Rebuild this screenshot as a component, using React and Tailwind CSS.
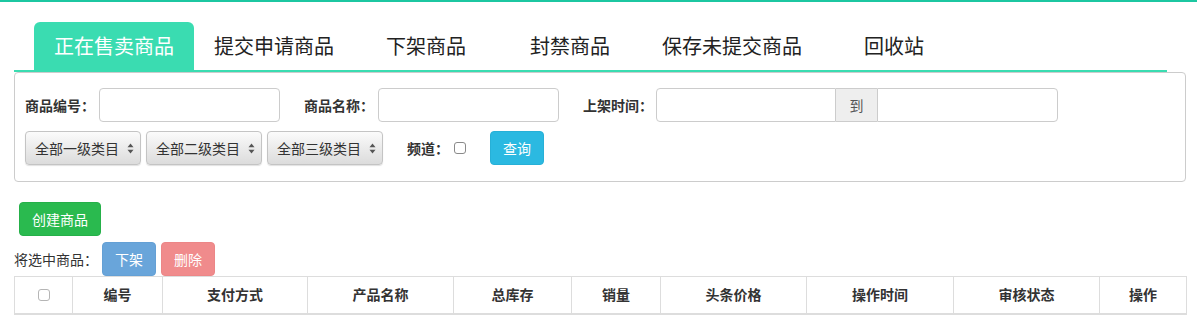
const tabs = ['正在售卖商品', '提交申请商品', '下架商品', '封禁商品', '保存未提交商品', '回收站'];
const cols = [
  { w: 58, t: '' },
  { w: 90, t: '编号' },
  { w: 145, t: '支付方式' },
  { w: 146, t: '产品名称' },
  { w: 118, t: '总库存' },
  { w: 89, t: '销量' },
  { w: 146, t: '头条价格' },
  { w: 147, t: '操作时间' },
  { w: 146, t: '审核状态' },
  { w: 87, t: '操作' },
];

function Arrows() {
  return (
    <svg width="7" height="11" viewBox="0 0 7 11" className="shrink-0">
      <path d="M3.5 0.5 L6.5 4.3 L0.5 4.3 Z" fill="#555" />
      <path d="M3.5 10.5 L6.5 6.7 L0.5 6.7 Z" fill="#555" />
    </svg>
  );
}

function Select({ label }) {
  return (
    <div className="w-[116px] h-[34px] rounded-[4px] border border-[#c4c4c4] bg-linear-to-b from-[#fbfbfb] via-[#ebebeb] to-[#dcdcdc] shadow-[0_1px_1px_rgba(0,0,0,0.12)] flex items-center justify-between pl-[9px] pr-[6px] text-[14px] text-[#333]">
      <span>{label}</span>
      <Arrows />
    </div>
  );
}

function Check({ light }) {
  return (
    <span
      className={
        light
          ? 'inline-block w-[12px] h-[12px] border border-[#b5b5b5] rounded-[3px] bg-white'
          : 'inline-block w-[12px] h-[12px] border border-[#8a8a8a] rounded-[3px] bg-white'
      }
    />
  );
}

export default function App() {
  return (
    <div className="w-[1197px] h-[334px] bg-white text-[#333] overflow-hidden font-['Noto_Sans_CJK_SC','Noto_Sans',sans-serif]">
      <div className="h-[2px] bg-[#1cc7a1]" />
      <div className="pl-[14px] pt-[20px]">
        <ul className="flex w-[1153px] border-b-2 border-[#3adcb1] pl-[20px]">
          {tabs.map((t, i) => (
            <li
              key={t}
              className={
                i === 0
                  ? 'h-[48px] min-w-[144px] px-[20px] flex items-center justify-center text-[20px] rounded-t-[6px] bg-[#3adcb1] text-white'
                  : 'h-[48px] min-w-[144px] px-[20px] flex items-center justify-center text-[20px] rounded-t-[6px] text-[#222]'
              }
            >
              {t}
            </li>
          ))}
        </ul>

        <div className="w-[1172px] border border-[#cccccc] rounded-[4px] pt-[15px] pb-[16px] pl-[10px]">
          <div className="flex items-center h-[34px] gap-[24px]">
            <div className="flex items-center">
              <span className="font-bold text-[14px] mr-[4px]">商品编号：</span>
              <div className="w-[181px] h-[34px] border border-[#cccccc] rounded-[4px] bg-white" />
            </div>
            <div className="flex items-center">
              <span className="font-bold text-[14px] mr-[4px]">商品名称：</span>
              <div className="w-[181px] h-[34px] border border-[#cccccc] rounded-[4px] bg-white" />
            </div>
            <div className="flex items-center">
              <span className="font-bold text-[14px] mr-[3px]">上架时间：</span>
              <div className="flex h-[34px]">
                <div className="w-[180px] border border-[#cccccc] rounded-l-[4px] bg-white" />
                <div className="w-[41px] border-y border-[#cccccc] bg-[#eeeeee] flex items-center justify-center text-[14px] text-[#555]">
                  到
                </div>
                <div className="w-[181px] border border-[#cccccc] rounded-r-[4px] bg-white" />
              </div>
            </div>
          </div>

          <div className="flex items-center h-[34px] mt-[9px]">
            <div className="flex gap-[5px]">
              <Select label="全部一级类目" />
              <Select label="全部二级类目" />
              <Select label="全部三级类目" />
            </div>
            <span className="font-bold text-[14px] ml-[24px] mr-[5px]">频道：</span>
            <Check light={false} />
            <button className="ml-[24px] h-[34px] px-[12px] rounded-[4px] bg-[#2bb9e1] border border-[#27b0d7] text-white text-[14px]">
              查询
            </button>
          </div>
        </div>

        <button className="mt-[20px] ml-[5px] h-[34px] px-[12px] rounded-[4px] bg-[#2aba4f] border border-[#25b049] text-white text-[14px]">
          创建商品
        </button>

        <div className="flex items-center mt-[6px] h-[34px]">
          <span className="text-[14px] mr-[4px]">将选中商品：</span>
          <button className="h-[34px] px-[12px] rounded-[4px] bg-[#69a5da] border border-[#64a0d5] text-white text-[14px]">
            下架
          </button>
          <button className="ml-[5px] h-[34px] px-[12px] rounded-[4px] bg-[#f08b8c] border border-[#ec8687] text-white text-[14px]">
            删除
          </button>
        </div>

        <table className="w-[1172px] table-fixed border-collapse border border-[#dddddd]">
          <colgroup>
            {cols.map((c, i) => (
              <col key={i} style={{ width: c.w }} />
            ))}
          </colgroup>
          <thead>
            <tr>
              {cols.map((c, i) => (
                <th
                  key={i}
                  className="border border-[#dddddd] border-b-2 h-[37px] text-center font-bold text-[14px] text-[#333] align-middle p-0"
                >
                  {i === 0 ? (
                    <span className="flex items-center justify-center">
                      <Check light />
                    </span>
                  ) : (
                    c.t
                  )}
                </th>
              ))}
            </tr>
          </thead>
        </table>
      </div>
    </div>
  );
}
